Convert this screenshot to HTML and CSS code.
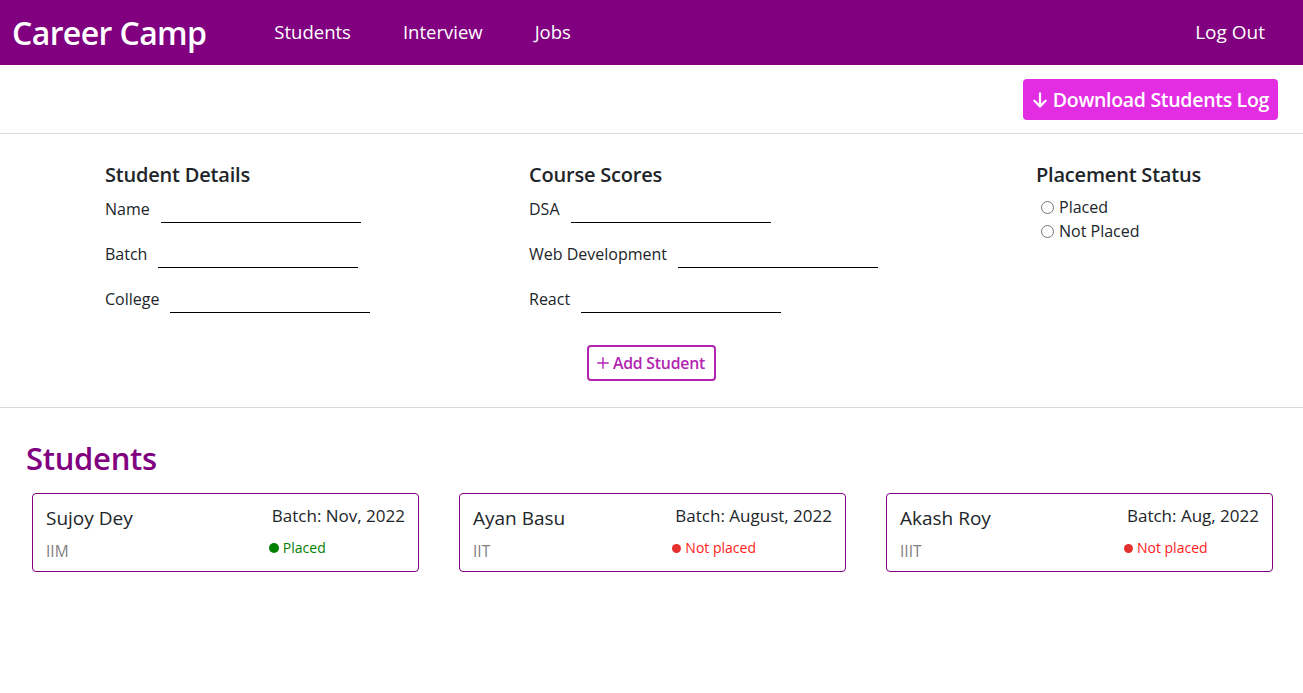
FILE: index.html
```html
<!DOCTYPE html>
<html lang="en">
<head>
<meta charset="utf-8">
<title>Career Camp</title>
<link rel="stylesheet" href="styles.css">
</head>
<body>
<nav class="navbar">
  <a class="brand" href="#">Career Camp</a>
  <ul class="nav-links">
    <li><a href="#">Students</a></li>
    <li><a href="#">Interview</a></li>
    <li><a href="#">Jobs</a></li>
  </ul>
  <a class="logout" href="#">Log Out</a>
</nav>

<div class="toolbar">
  <button class="btn-download" type="button">
    <svg class="icon-down" viewBox="0 0 16 16" width="18" height="18"><path d="M8 2v11.5M3 8.7l5 5 5-5" fill="none" stroke="currentColor" stroke-width="2" stroke-linecap="round" stroke-linejoin="round"/></svg>
    Download Students Log
  </button>
</div>
<hr class="divider">

<form class="student-form">
  <div class="form-columns">
    <fieldset class="col col-details">
      <h3 class="col-title">Student Details</h3>
      <label class="field"><span>Name</span><input type="text"></label>
      <label class="field"><span>Batch</span><input type="text"></label>
      <label class="field"><span>College</span><input type="text"></label>
    </fieldset>
    <fieldset class="col col-scores">
      <h3 class="col-title">Course Scores</h3>
      <label class="field"><span>DSA</span><input type="text"></label>
      <label class="field"><span>Web Development</span><input type="text"></label>
      <label class="field"><span>React</span><input type="text"></label>
    </fieldset>
    <fieldset class="col col-status">
      <h3 class="col-title">Placement Status</h3>
      <label class="radio"><input type="radio" name="status"><span>Placed</span></label>
      <label class="radio"><input type="radio" name="status"><span>Not Placed</span></label>
    </fieldset>
  </div>
  <div class="form-actions">
    <button class="btn-add" type="button">
      <svg viewBox="0 0 16 16" width="14" height="14"><path d="M8 1.5v13M1.5 8h13" fill="none" stroke="currentColor" stroke-width="1.6"/></svg>
      Add Student
    </button>
  </div>
</form>
<hr class="divider">

<section class="students">
  <h2 class="section-title">Students</h2>
  <div class="card-grid">
    <div class="card">
      <div class="card-left">
        <div class="s-name">Sujoy Dey</div>
        <div class="s-college">IIM</div>
      </div>
      <div class="card-right">
        <div class="s-batch">Batch: Nov, 2022</div>
        <div class="s-status placed"><i class="dot"></i>Placed</div>
      </div>
    </div>
    <div class="card">
      <div class="card-left">
        <div class="s-name">Ayan Basu</div>
        <div class="s-college">IIT</div>
      </div>
      <div class="card-right">
        <div class="s-batch">Batch: August, 2022</div>
        <div class="s-status not-placed"><i class="dot"></i>Not placed</div>
      </div>
    </div>
    <div class="card">
      <div class="card-left">
        <div class="s-name">Akash Roy</div>
        <div class="s-college">IIIT</div>
      </div>
      <div class="card-right">
        <div class="s-batch">Batch: Aug, 2022</div>
        <div class="s-status not-placed"><i class="dot"></i>Not placed</div>
      </div>
    </div>
  </div>
</section>
</body>
</html>
```

FILE: styles.css
```css
* { box-sizing: border-box; }
body {
  margin: 0;
  font-family: "Open Sans", "Noto Sans", "Liberation Sans", sans-serif;
  color: #212529;
  background: #fff;
}
a { text-decoration: none; color: inherit; }

.navbar {
  height: 65px;
  background: #800080;
  display: flex;
  align-items: center;
  padding: 0 38px 0 12px;
  color: #fff;
}
.brand {
  font-size: 32px;
  font-weight: 600;
  letter-spacing: -0.6px;
  margin-top: -1px;
}
.nav-links {
  list-style: none;
  display: flex;
  gap: 52px;
  margin: -2px 0 0 68px;
  padding: 0;
  font-size: 18.5px;
}
.logout {
  margin-left: auto;
  font-size: 19px;
  margin-top: -2px;
}

.toolbar {
  display: flex;
  justify-content: flex-end;
  padding: 14px 25px 13px;
}
.btn-download {
  height: 41px;
  display: flex;
  align-items: center;
  gap: 4px;
  padding: 0 9px 0 8px;
  background: #e32de3;
  color: #fff;
  border: none;
  border-radius: 4px;
  font-family: inherit;
  font-size: 19.5px;
  font-weight: 600;
  letter-spacing: -0.3px;
}
.icon-down { flex: none; }

.divider {
  margin: 0;
  border: none;
  border-top: 1px solid #d9d9d9;
}

.student-form { padding: 28px 0 26px; }
.form-columns {
  display: flex;
  justify-content: center;
  gap: 159px;
}
.col {
  border: none;
  margin: 0;
  padding: 0;
  display: flex;
  flex-direction: column;
  min-width: 0;
}
.col-details { width: 265px; }
.col-scores { width: 348px; }
.col-status { width: 162px; }
.col-title {
  margin: 0 0 10px;
  font-size: 20px;
  font-weight: 600;
  line-height: 25px;
  letter-spacing: -0.2px;
  white-space: nowrap;
}
.field {
  display: flex;
  align-items: flex-start;
  gap: 11px;
  height: 25px;
  margin-bottom: 20px;
  font-size: 16px;
  line-height: 24px;
  white-space: nowrap;
}
.field input {
  width: 200px;
  height: 25px;
  margin-top: 1px;
  border: none;
  border-bottom: 1px solid #000;
  outline: none;
  font: inherit;
  background: transparent;
  padding: 0;
}
.radio {
  display: flex;
  align-items: center;
  gap: 5px;
  height: 24px;
  padding-left: 5px;
  font-size: 16px;
  white-space: nowrap;
}
.col-status .col-title { margin-bottom: 8px; }
.radio input {
  margin: 0;
  width: 13px;
  height: 13px;
}

.form-actions {
  display: flex;
  justify-content: center;
  margin-top: 13px;
}
.btn-add {
  height: 36px;
  display: flex;
  align-items: center;
  gap: 3px;
  padding: 0 9px 0 7px;
  background: #fff;
  color: #b224b2;
  border: 2px solid #b224b2;
  border-radius: 4px;
  font-family: inherit;
  font-size: 15.8px;
  font-weight: 600;
  letter-spacing: -0.2px;
}

.students { padding: 31px 30px 0 32px; }
.section-title {
  margin: 0 0 16px -6px;
  font-size: 31px;
  line-height: 38px;
  font-weight: 600;
  color: #800080;
  letter-spacing: -0.3px;
}
.card-grid {
  display: grid;
  grid-template-columns: repeat(3, 1fr);
  gap: 40px;
}
.card {
  height: 79px;
  border: 1px solid #800080;
  border-radius: 4px;
  display: flex;
  justify-content: space-between;
  padding: 11px 13px 0 13px;
}
.card-left, .card-right {
  display: flex;
  flex-direction: column;
}
.s-name {
  font-size: 19px;
  line-height: 26px;
}
.s-college {
  margin-top: 9px;
  font-size: 15.5px;
  line-height: 22px;
  color: #808080;
}
.s-batch {
  font-size: 17px;
  line-height: 24px;
  margin-top: -1px;
}
.s-status {
  margin-top: 10px;
  font-size: 14px;
  line-height: 20px;
  display: flex;
  align-items: center;
  gap: 4px;
}
.dot {
  width: 10px;
  height: 10px;
  border-radius: 50%;
  display: inline-block;
}
.placed { color: #008000; margin-left: -3px; }
.placed .dot { background: #008000; }
.not-placed { color: #ff1a1a; margin-left: -3px; }
.not-placed .dot { background: #e53030; width: 9px; height: 9px; }
```
